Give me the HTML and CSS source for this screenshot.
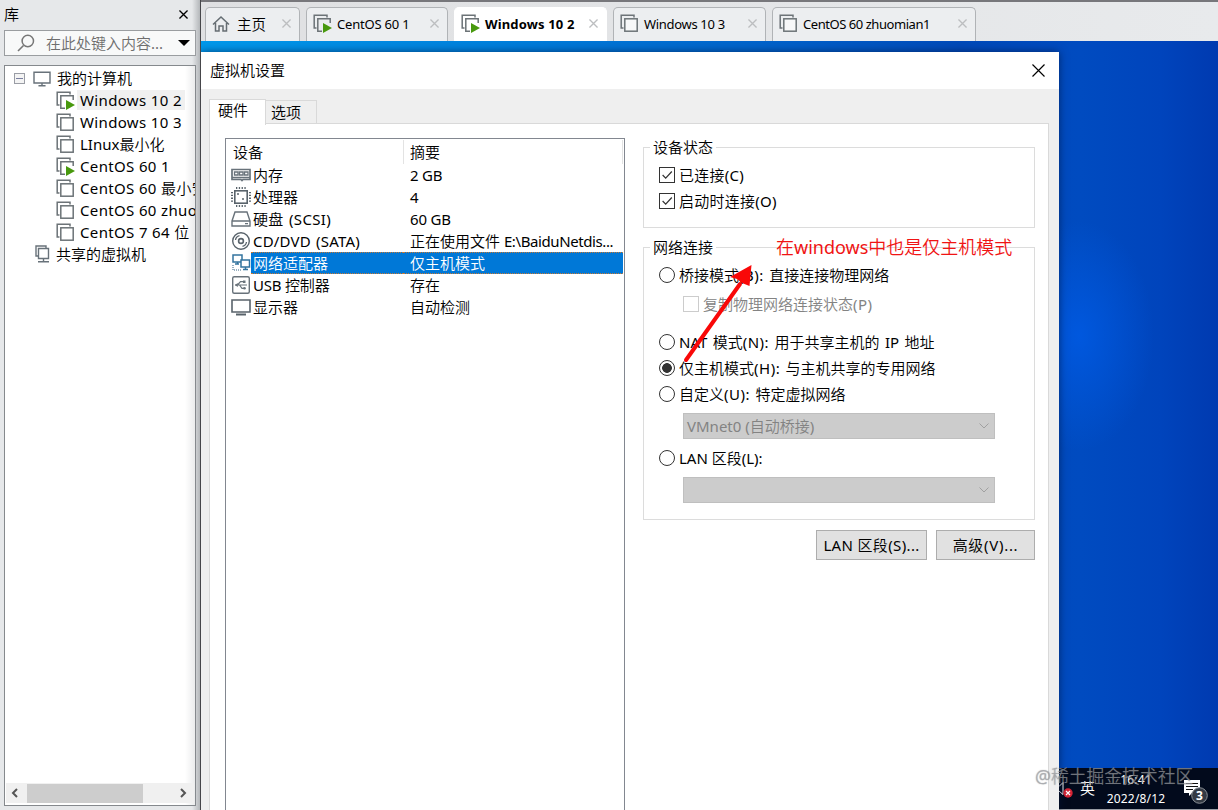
FILE: index.html
```html
<!DOCTYPE html>
<html lang="zh-CN">
<head>
<meta charset="utf-8">
<title>虚拟机设置</title>
<link rel="stylesheet" href="styles.css">
</head>
<body>
<svg class="defs" width="0" height="0">
  <defs>
    <symbol id="vm" viewBox="0 0 20 20"><path d="M14 3.5V1.2H1.2V14H3.5" fill="none" stroke="#6c7377" stroke-width="1.5"/><rect x="4.8" y="4.8" width="12.4" height="12.4" fill="#fff" fill-opacity=".6" stroke="#6c7377" stroke-width="1.5"/></symbol>
    <symbol id="vmrun" viewBox="0 0 20 20"><path d="M14 3.5V1.2H1.2V14H3.5M17.2 9V4.8H4.8v12.4H9" fill="none" stroke="#6c7377" stroke-width="1.5"/><path d="M10 9l9 5-9 5z" fill="#48990e"/></symbol>
    <symbol id="x" viewBox="0 0 10 10"><path d="M.5.5l9 9M9.500.5l-9 9" fill="none" stroke="currentColor" stroke-width="1.5"/></symbol>
    <symbol id="chev" viewBox="0 0 10 6"><path d="M.5.5L5 5 9.500.5" fill="none" stroke="#a0a0a0"/></symbol>
    <symbol id="monitor" viewBox="0 0 20 18"><path d="M1 1.500h18v12H1zM6 16.500h8M10 13.500v3" fill="none" stroke="#68727a" stroke-width="1.600"/></symbol>
  </defs>
</svg>
<div class="app">
  <aside class="library">
    <div class="lib-head"><span>库</span><svg class="lib-close"><use href="#x"/></svg></div>
    <div class="search">
      <svg width="18" height="18" viewBox="0 0 18 18"><path d="M1 17l5.500-5.500" stroke="#777" stroke-width="1.600"/><circle cx="10.800" cy="7" r="5.700" fill="none" stroke="#777" stroke-width="1.500"/></svg>
      <span>在此处键入内容...</span><i class="caret"></i>
    </div>
    <div class="tree">
      <div class="node root"><i class="toggle"></i><svg width="19" height="16"><use href="#monitor"/></svg><span>我的计算机</span></div>
      <div class="node"><svg><use href="#vmrun"/></svg><span class="current">Windows 10 2</span></div>
      <div class="node"><svg><use href="#vm"/></svg><span>Windows 10 3</span></div>
      <div class="node"><svg><use href="#vm"/></svg><span class="mixed">LInux最小化</span></div>
      <div class="node"><svg><use href="#vmrun"/></svg><span>CentOS 60 1</span></div>
      <div class="node"><svg><use href="#vm"/></svg><span>CentOS 60 最小安</span></div>
      <div class="node"><svg><use href="#vm"/></svg><span>CentOS 60 zhuo</span></div>
      <div class="node"><svg><use href="#vm"/></svg><span>CentOS 7 64 位</span></div>
      <div class="node shared"><svg width="16" height="18" viewBox="0 0 16 18"><path d="M3 11H1V1h10v2M3.500 3.500h10v10h-10zM8.500 13.500v3M3 16.700h11" fill="none" stroke="#68727a" stroke-width="1.400"/></svg><span>共享的虚拟机</span></div>
      <div class="scroll"><svg width="8" height="10" viewBox="0 0 8 10"><path d="M6 1L2 5l4 4" fill="none" stroke="#555" stroke-width="2"/></svg><i class="track"></i><svg width="8" height="10" viewBox="0 0 8 10"><path d="M2 1l4 4-4 4" fill="none" stroke="#555" stroke-width="2"/></svg></div>
    </div>
  </aside>
  <main class="work">
    <nav class="vmtabs">
      <div class="vmtab t1"><svg viewBox="0 0 18 18"><path d="M1 9.500L9 2l8 7.500M3.500 8v8H7v-5h4v5h3.500V8" fill="none" stroke="#656d72" stroke-width="1.500"/></svg><span>主页</span><svg class="close"><use href="#x"/></svg></div>
      <div class="vmtab t2"><svg><use href="#vmrun"/></svg><span>CentOS 60 1</span><svg class="close"><use href="#x"/></svg></div>
      <div class="vmtab t3"><svg><use href="#vmrun"/></svg><span>Windows 10 2</span><svg class="close"><use href="#x"/></svg></div>
      <div class="vmtab t4"><svg><use href="#vm"/></svg><span>Windows 10 3</span><svg class="close"><use href="#x"/></svg></div>
      <div class="vmtab t5"><svg><use href="#vm"/></svg><span>CentOS 60 zhuomian1</span><svg class="close"><use href="#x"/></svg></div>
    </nav>
    <div class="desktop">
      <div class="taskbar">
        <svg class="sound" width="14" height="18" viewBox="0 0 14 18"><path d="M0 5.500L4 1.500v12L0 10" fill="none" stroke="#fff"/><circle cx="9" cy="12" r="4.700" fill="#d52435"/><path d="M7 10l4 4M11 10l-4 4" stroke="#fff" stroke-width="1.200"/></svg>
        <span class="ime">英</span>
        <div class="clock"><span class="time">16:41</span><span class="date">2022/8/12</span></div>
        <svg class="notes" width="26" height="26" viewBox="0 0 26 26"><path d="M1 1h16v13H9l-3 3v-3H1z" fill="#fff"/><path d="M3 4.500h12M3 7.500h12M3 10.500h7" stroke="#111" stroke-width="1.200"/><circle cx="16.500" cy="16.500" r="7.800" fill="#343a44" stroke="#8b9096"/><text class="badge" x="16.500" y="21" text-anchor="middle">3</text></svg>
      </div>
    </div>
  </main>
</div>

<section class="dialog">
  <header class="title"><span>虚拟机设置</span><svg width="13" height="13" viewBox="0 0 13 13"><path d="M.5.5l12 12M12.500.5l-12 12" stroke="#000" stroke-width="1.150"/></svg></header>
  <div class="content">
    <div class="pages"><span class="page on">硬件</span><span class="page">选项</span></div>
    <div class="panel">
      <div class="devices">
        <div class="row head"><span class="name">设备</span><span class="sum">摘要</span></div>
        <div class="row"><svg viewBox="0 0 20 20"><path d="M1 4.500h18v10h-7l-1 1-1-1H1zM1 12.500h18" fill="none" stroke="#68727a" stroke-width="1.700"/><path d="M3.500 7h3.500v3H3.500zM8.500 7H12v3H8.500zM13.500 7H17v3h-3.500z" fill="none" stroke="#68727a" stroke-width="1.300"/></svg><span class="name">内存</span><span class="sum tight">2 GB</span></div>
        <div class="row"><svg viewBox="0 0 20 20"><rect x="3.800" y="3.800" width="12.400" height="12.400" fill="none" stroke="#59636b" stroke-width="1.600"/><path d="M5 1h10M5 19h10" stroke="#59636b" stroke-width="2" stroke-dasharray="1.300 1.500"/><path d="M1 5v10M19 5v10" stroke="#59636b" stroke-width="2" stroke-dasharray="1.300 1.500"/><circle cx="7" cy="7" r="1" fill="#59636b"/><circle cx="12" cy="12" r="1" fill="#59636b"/></svg><span class="name">处理器</span><span class="sum">4</span></div>
        <div class="row"><svg viewBox="0 0 20 20"><path d="M1 12L4 3h12l3 9v5H1zM1 12h18M14 14.600h3" fill="none" stroke="#68727a" stroke-width="1.400"/></svg><span class="name scsi">硬盘 (SCSI)</span><span class="sum tight">60 GB</span></div>
        <div class="row"><svg viewBox="0 0 20 20"><circle cx="10" cy="10" r="8.300" fill="none" stroke="#59636b" stroke-width="1.400"/><circle cx="10" cy="10" r="2.400" fill="none" stroke="#59636b" stroke-width="1.600"/><path d="M4.500 9Q5 5.500 8.500 4.700M11.500 15.300Q15 14.500 15.500 11" fill="none" stroke="#59636b" stroke-width="1.300"/></svg><span class="name cd">CD/DVD (SATA)</span><span class="sum">正在使用文件 <span class="path">E:\BaiduNetdis...</span></span></div>
        <div class="row selected"><svg viewBox="0 0 20 20"><path d="M2 2h9v7H2zM4 11h4M6.500 9v2" fill="none" stroke="#33749f" stroke-width="1.500"/><path d="M10 7h8.500v7H10zM12 16.500h5M14.500 14v2" fill="#fff" stroke="#33749f" stroke-width="1.500"/><path d="M2 12v5h9" fill="none" stroke="#7898ad" stroke-dasharray="1 1" stroke-width="1.500"/></svg><span class="name">网络适配器</span><span class="sum">仅主机模式</span></div>
        <div class="row"><svg viewBox="0 0 20 20"><rect x="1.700" y="1.700" width="16.600" height="16.600" rx="1.500" fill="none" stroke="#68727a" stroke-width="1.400"/><path d="M4 10h12M6.500 10l3-3.300H12M8.500 10l2.500 3.300h2" fill="none" stroke="#68727a" stroke-width="1.200"/><path d="M3.800 10l3-2v4zM12 5.500h2.500v2.500H12z" fill="#68727a"/><circle cx="13.500" cy="13.300" r="1.300" fill="#68727a"/></svg><span class="name tight">USB 控制器</span><span class="sum">存在</span></div>
        <div class="row"><svg viewBox="0 0 20 20"><path d="M1 3h18v12H1z" fill="none" stroke="#59636b" stroke-width="1.600"/><path d="M5 17.500h10" stroke="#59636b" stroke-width="2"/></svg><span class="name">显示器</span><span class="sum">自动检测</span></div>
      </div>
      <div class="settings">
        <div class="group status"><span class="legend">设备状态</span>
          <div class="opt"><i class="box"><svg viewBox="0 0 16 16"><path d="M3 8l3.500 3.500 7-7.500" fill="none" stroke="#333" stroke-width="1.400"/></svg></i><span class="parens">已连接(C)</span></div>
          <div class="opt"><i class="box"><svg viewBox="0 0 16 16"><path d="M3 8l3.500 3.500 7-7.500" fill="none" stroke="#333" stroke-width="1.400"/></svg></i><span class="parens">启动时连接(O)</span></div>
        </div>
        <div class="group net"><span class="legend">网络连接</span>
          <div class="opt"><i class="radio"></i><span class="wide">桥接模式<span class="key">(B):</span> 直接连接物理网络</span></div>
          <div class="opt sub"><i class="box"></i><span>复制物理网络连接状态<span class="key">(P)</span></span></div>
          <div class="opt"><i class="radio"></i><span class="wide">NAT 模式<span class="key">(N):</span> 用于共享主机的 IP 地址</span></div>
          <div class="opt"><i class="radio checked"></i><span class="wide">仅主机模式<span class="key">(H):</span> 与主机共享的专用网络</span></div>
          <div class="opt"><i class="radio"></i><span class="wide">自定义<span class="key">(U):</span> 特定虚拟网络</span></div>
          <div class="combo"><span>VMnet0 (自动桥接)</span><svg width="10" height="6"><use href="#chev"/></svg></div>
          <div class="opt lan"><i class="radio"></i><span>LAN 区段(L):</span></div>
          <div class="combo"><span></span><svg width="10" height="6"><use href="#chev"/></svg></div>
        </div>
        <div class="buttons"><button class="lanbtn">LAN 区段(S)...</button><button class="advbtn">高级(V)...</button></div>
      </div>
    </div>
  </div>
</section>
<span class="callout">在windows中也是仅主机模式</span>
<svg class="arrow" width="80" height="105" viewBox="0 0 80 105"><path d="M6 99L60 23" stroke="#f90808" stroke-width="4" stroke-linecap="round"/><path d="M71.500 4L69.500 25 62 22 57 18 50 16z" fill="#f90808"/></svg>
<span class="watermark">@稀土掘金技术社区</span>
</body>
</html>
```
FILE: styles.css
```css
* { box-sizing: border-box; }
body { margin: 0; width: 1218px; height: 810px; overflow: hidden; position: relative; background: #e4e6e8; color: #000; font: 15px/22px "Noto Sans", "Noto Sans CJK SC DemiLight", "Noto Sans CJK SC Light", "Noto Sans CJK SC", sans-serif; }
span { white-space: nowrap; }
svg, i { flex: none; display: block; }
.defs { position: absolute; }
.app { display: flex; height: 810px; }

.library { width: 201px; padding: 0 4px 4px 4px; display: flex; flex-direction: column; background: linear-gradient(90deg, #e6e8ea 192px, #b4b7ba 200px); border-right: 1px solid #46464a; }
.lib-head { height: 30px; display: flex; align-items: center; justify-content: space-between; padding: 0 8px 2px 0; }
.lib-close { width: 9px; height: 9px; }
.search { height: 26px; border: 1px solid #9a9da0; background: #f8f9f9; display: flex; align-items: center; padding: 0 5px 0 12px; color: #6e6e6e; }
.search span { margin-left: 11px; flex: 1; }
.caret { border: 6px solid transparent; border-top-color: #000; border-bottom: 0; }
.tree { margin-top: 9px; flex: 1; border: 1px solid #85898d; background: linear-gradient(90deg, #fff 180px, #e9eaeb 191px); overflow: hidden; display: flex; flex-direction: column; padding: 1px 1px 2px; }
.node { height: 22px; display: flex; align-items: center; padding-left: 50px; gap: 1px; flex: none; }
.node svg { width: 20px; height: 20px; margin-top: 1px; }
.node span { padding: 0 3px; height: 20px; line-height: 20px; letter-spacing: .35px; }
.node .mixed, .root span, .shared span { letter-spacing: 0; }
.node .current { background: #f0f0f0; }
.node.root { padding-left: 8px; }
.node.root svg { width: 18px; height: 16px; margin-left: 7px; }
.node.root span { margin-left: 2px; letter-spacing: 0; }
.toggle { width: 11px; height: 11px; border: 1px solid #9a9da5; background: linear-gradient(#7a7fa0, #7a7fa0) center / 7px 1px no-repeat #f4f4f4; }
.node.shared { padding-left: 29px; }
.node.shared span { letter-spacing: 0; }
.node.shared svg { width: 16px; height: 18px; margin: 0 1px 0 0; }
.scroll { margin-top: auto; height: 20px; background: #f0f0f0; display: flex; align-items: center; padding: 0 7px 0 5px; }
.track { width: 116px; height: 19px; background: #cdcdcd; margin: 0 auto 0 8px; }

.work { flex: 1; display: flex; flex-direction: column; }
.vmtabs { height: 41px; border-top: 2px solid #77777b; background: linear-gradient(90deg, #dfe0e2, #e8eaec); display: flex; align-items: flex-end; gap: 6px; padding-left: 4px; }
.vmtab { height: 34px; border: 1px solid #b0b3b6; border-bottom: 0; border-radius: 5px 5px 0 0; background: #eceef0; display: flex; align-items: center; padding: 0 8px 2px 6px; gap: 4px; font-size: 13px; }
.vmtab svg { width: 20px; height: 20px; }
.vmtab span { flex: 1; }
.vmtab .close { width: 9px; height: 9px; color: #bcbec0; }
.vmtab.t1 { width: 95px; }
.t1 svg:first-child { width: 18px; height: 18px; }
.t1 span { font-size: 14.5px; padding-left: 3px; }
.t2 { width: 142px; letter-spacing: -.2px; }
.t3 { width: 153px; background: #fff; border-color: #fff; letter-spacing: .15px; }
.t3 span { font-weight: 700; }
.t4 { width: 153px; letter-spacing: -.32px; }
.t5 { width: 204px; letter-spacing: -.45px; }
.desktop { flex: 1; display: flex; flex-direction: column; justify-content: flex-end; background: radial-gradient(ellipse 75px 115px at 878px 295px, rgba(0, 92, 232, .75), transparent), linear-gradient(90deg, #0098ea 0, #0080dc 290px, #005fc8 590px, #0049b8 760px, #004bc0 880px, #0044bc 960px, #003ab0 1017px); }
.taskbar { height: 42px; border-bottom: 1px solid #9a9da5; margin-left: 858px; background: #020a1c; color: #fff; display: flex; align-items: flex-start; font-size: 12px; }
.sound { margin-top: 13px; }
.ime { font-size: 15px; margin: 9px 0 0 7px; }
.clock { width: 76px; margin-left: 3px; display: flex; flex-direction: column; align-items: center; line-height: 19px; padding-top: 2px; letter-spacing: .2px; }
.notes { margin: 11px 0 0 9px; }
.badge { fill: #fff; font-size: 12px; font-weight: 700; }

.dialog { position: absolute; left: 201px; top: 52px; width: 858px; height: 758px; background: #efefef; box-shadow: 0 0 8px rgba(0, 20, 60, .65); clip-path: inset(-10px -14px 0 0); display: flex; flex-direction: column; }
.title { height: 37px; background: #fff; display: flex; align-items: center; justify-content: space-between; padding: 0 14px 1px 9px; }
.content { flex: 1; padding: 9px 10px 0 8px; display: flex; flex-direction: column; }
.pages { display: flex; align-items: flex-end; height: 26px; }
.page { height: 24px; width: 51px; border: 1px solid #d9d9d9; border-left: 0; padding-left: 5px; line-height: 22px; }
.page.on { width: 57px; height: 26px; border: 1px solid #d9d9d9; border-bottom: 0; background: #fff; padding-left: 8px; position: relative; top: 1px; line-height: 21px; z-index: 1; }
.panel { flex: 1; border: 1px solid #d9d9d9; border-bottom: 0; background: #fff; display: flex; padding: 14px 13px 0 15px; margin-top: -1px; }
.devices { width: 400px; border: 1px solid #828790; border-bottom: 0; padding: 1px 1px 0 5px; display: flex; flex-direction: column; }
.row { height: 22px; display: flex; align-items: center; flex: none; }
.row svg { width: 20px; height: 20px; }
.row .name { width: 152px; padding-left: 2px; height: 22px; }
.row .sum { flex: 1; padding-left: 7px; height: 22px; }
.row.head { height: 24px; }
.row.head .name { width: 173px; border-right: 1px solid #e3e3e3; height: 24px; line-height: 24px; }
.row.head .sum { border-right: 1px solid #e3e3e3; padding-left: 6px; height: 24px; line-height: 24px; }
.row.selected .name, .row.selected .sum { background: #0078d7; color: #fff; border: 1px dotted #c77a35; border-width: 1px 0; line-height: 20px; }
.wide { word-spacing: 1.500px; }
.key { letter-spacing: .5px; }
.scsi { word-spacing: 1px; letter-spacing: .35px; }
.cd { word-spacing: 1px; letter-spacing: .2px; }
.tight { letter-spacing: -.2px; }
.path { letter-spacing: -.4px; }
.parens { letter-spacing: .25px; }

.settings { width: 392px; margin-left: 18px; padding-top: 9px; display: flex; flex-direction: column; }
.group { border: 1px solid #dcdcdc; padding-left: 15px; display: flex; flex-direction: column; }
.legend { align-self: flex-start; background: #fff; margin: -12px 0 0 -9px; padding: 0 3px; height: 22px; }
.status { height: 81px; margin-bottom: 19px; }
.net { height: 273px; }
.opt { height: 26px; display: flex; align-items: center; gap: 4px; }
.legend + .opt { margin-top: 4px; }
.box { width: 16px; height: 16px; border: 1px solid #333; }
.box svg { width: 14px; height: 14px; }
.radio { width: 16px; height: 16px; border: 1px solid #333; border-radius: 50%; }
.checked { background: radial-gradient(circle, #333 4.500px, transparent 5.200px); }
.sub { margin: 3px 0 12px 24px; color: #838383; }
.sub .box { border-color: #ccc; }
.combo { width: 312px; height: 26px; margin: 6px 0 0 24px; background: #ccc; border: 1px solid #bfbfbf; color: #838383; display: flex; justify-content: space-between; align-items: center; padding: 0 5px 0 3px; }
.lan { margin-top: 6px; }
.buttons { display: flex; justify-content: flex-end; gap: 9px; margin-top: 10px; }
.buttons button { height: 30px; border: 1px solid #adadad; background: #e1e1e1; font: inherit; color: #000; padding: 0; white-space: nowrap; letter-spacing: .35px; }
.lanbtn { width: 111px; }
.buttons .advbtn { width: 99px; letter-spacing: .7px; }

.callout { position: absolute; left: 776px; top: 234px; font-size: 18px; line-height: 26px; color: #f01414; }
.arrow { position: absolute; left: 680px; top: 261px; }
.watermark { position: absolute; left: 1035px; top: 763px; font-size: 17.800px; line-height: 26px; color: rgba(165, 168, 174, .6); text-shadow: 0 0 1px rgba(80, 80, 80, .5); }
```
